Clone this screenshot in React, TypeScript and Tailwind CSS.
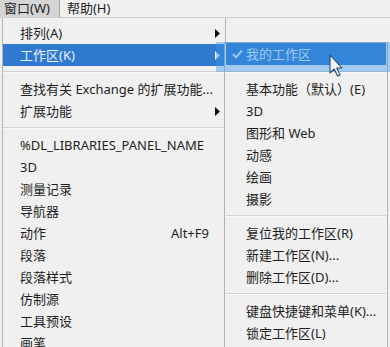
import React from "react";

const font = { fontFamily: '"Noto Sans", "Noto Sans CJK SC", sans-serif' };

function Arrow({ light }: { light?: boolean }) {
  return (
    <svg width="5" height="9" viewBox="0 0 5 9" className="shrink-0">
      <path d="M0 0 L5 4.5 L0 9 Z" fill={light ? "#eef4fb" : "#111111"} />
    </svg>
  );
}

function Row({
  label,
  active,
  sub,
  shortcut,
}: {
  label: string;
  active?: boolean;
  sub?: boolean;
  shortcut?: string;
}) {
  return (
    <div
      className={`h-[22px] flex items-center pl-[17px] pr-[5px] ${
        active ? "bg-[#2f79cf] text-[#eef4fb]" : "text-[#1e1e1e]"
      }`}
    >
      <span className="flex-1 whitespace-nowrap">{label}</span>
      {shortcut && <span className="mr-[11px] whitespace-nowrap">{shortcut}</span>}
      {sub && <Arrow light={active} />}
    </div>
  );
}

function Sep({ h = "h-[12px]" }: { h?: string }) {
  return (
    <div className={`${h} flex flex-col justify-center`}>
      <div className="h-px bg-[#d2d2d2]" />
      <div className="h-px bg-[#fafafa]" />
    </div>
  );
}

function SubRow({ label, active, check }: { label: string; active?: boolean; check?: boolean }) {
  return (
    <div
      className={`h-[22px] flex items-center pl-[20px] relative ${
        active ? "bg-[#2f79cf] text-[#e6eef8]" : "text-[#1e1e1e]"
      }`}
    >
      {check && (
        <svg width="11" height="10" viewBox="0 0 11 10" className="absolute left-[6px] top-[6px]">
          <path d="M1 5 L4 8.3 L10 1.3" fill="none" stroke="#e6eef8" strokeWidth="1.9" />
        </svg>
      )}
      <span className="whitespace-nowrap">{label}</span>
    </div>
  );
}

export default function App() {
  return (
    <div className="relative w-[390px] h-[347px] overflow-hidden bg-[#f0f0f0] text-[13px] leading-none" style={font}>
      {/* menubar */}
      <div className="h-[18px] flex border-b border-[#cfcfcf] text-[13px] text-[#1e1e1e]">
        <div className="h-full pl-[4px] pr-[9px] bg-[#d5d5d5] border-r border-[#a5a5a5] flex items-center">窗口(W)</div>
        <div className="h-full px-[7px] flex items-center">帮助(H)</div>
      </div>

      {/* main menu */}
      <div className="ml-[2px] w-[224px] h-[329px] bg-[#f0f0f0] border-l border-r border-[#b4b4b4] pt-[4px]">
        <Row label="排列(A)" sub />
        <Row label="工作区(K)" sub active />
        <Sep />
        <Row label="查找有关 Exchange 的扩展功能..." />
        <Row label="扩展功能" sub />
        <Sep />
        <Row label="%DL_LIBRARIES_PANEL_NAME" />
        <Row label="3D" />
        <Row label="测量记录" />
        <Row label="导航器" />
        <Row label="动作" shortcut="Alt+F9" />
        <Row label="段落" />
        <Row label="段落样式" />
        <Row label="仿制源" />
        <Row label="工具预设" />
        <Row label="画笔" />
      </div>

      {/* submenu */}
      <div className="absolute left-[224px] top-[42px] w-[164px] h-[320px] bg-[#f0f0f0] border border-[#b4b4b4] px-[1px]">
        <SubRow label="我的工作区" active check />
        <Sep h="h-[13px]" />
        <SubRow label="基本功能（默认）(E)" />
        <SubRow label="3D" />
        <SubRow label="图形和 Web" />
        <SubRow label="动感" />
        <SubRow label="绘画" />
        <SubRow label="摄影" />
        <Sep />
        <SubRow label="复位我的工作区(R)" />
        <SubRow label="新建工作区(N)..." />
        <SubRow label="删除工作区(D)..." />
        <Sep />
        <SubRow label="键盘快捷键和菜单(K)..." />
        <SubRow label="锁定工作区(L)" />
      </div>

      {/* translucent selection glow */}
      <div className="absolute left-[216px] top-[42px] w-[174px] h-[30px] bg-[rgba(58,150,230,0.42)] pointer-events-none" />

      {/* mouse cursor */}
      <svg width="15" height="24" viewBox="0 0 15 24" className="absolute left-[329px] top-[54px]">
        <path
          d="M1 1 L1 19 L5.2 15 L8.5 22 L11 21 L7.8 14 L13 14 Z"
          fill="#eef4fb"
          stroke="#2a4a6a"
          strokeWidth="1.1"
          strokeLinejoin="round"
        />
      </svg>
    </div>
  );
}
